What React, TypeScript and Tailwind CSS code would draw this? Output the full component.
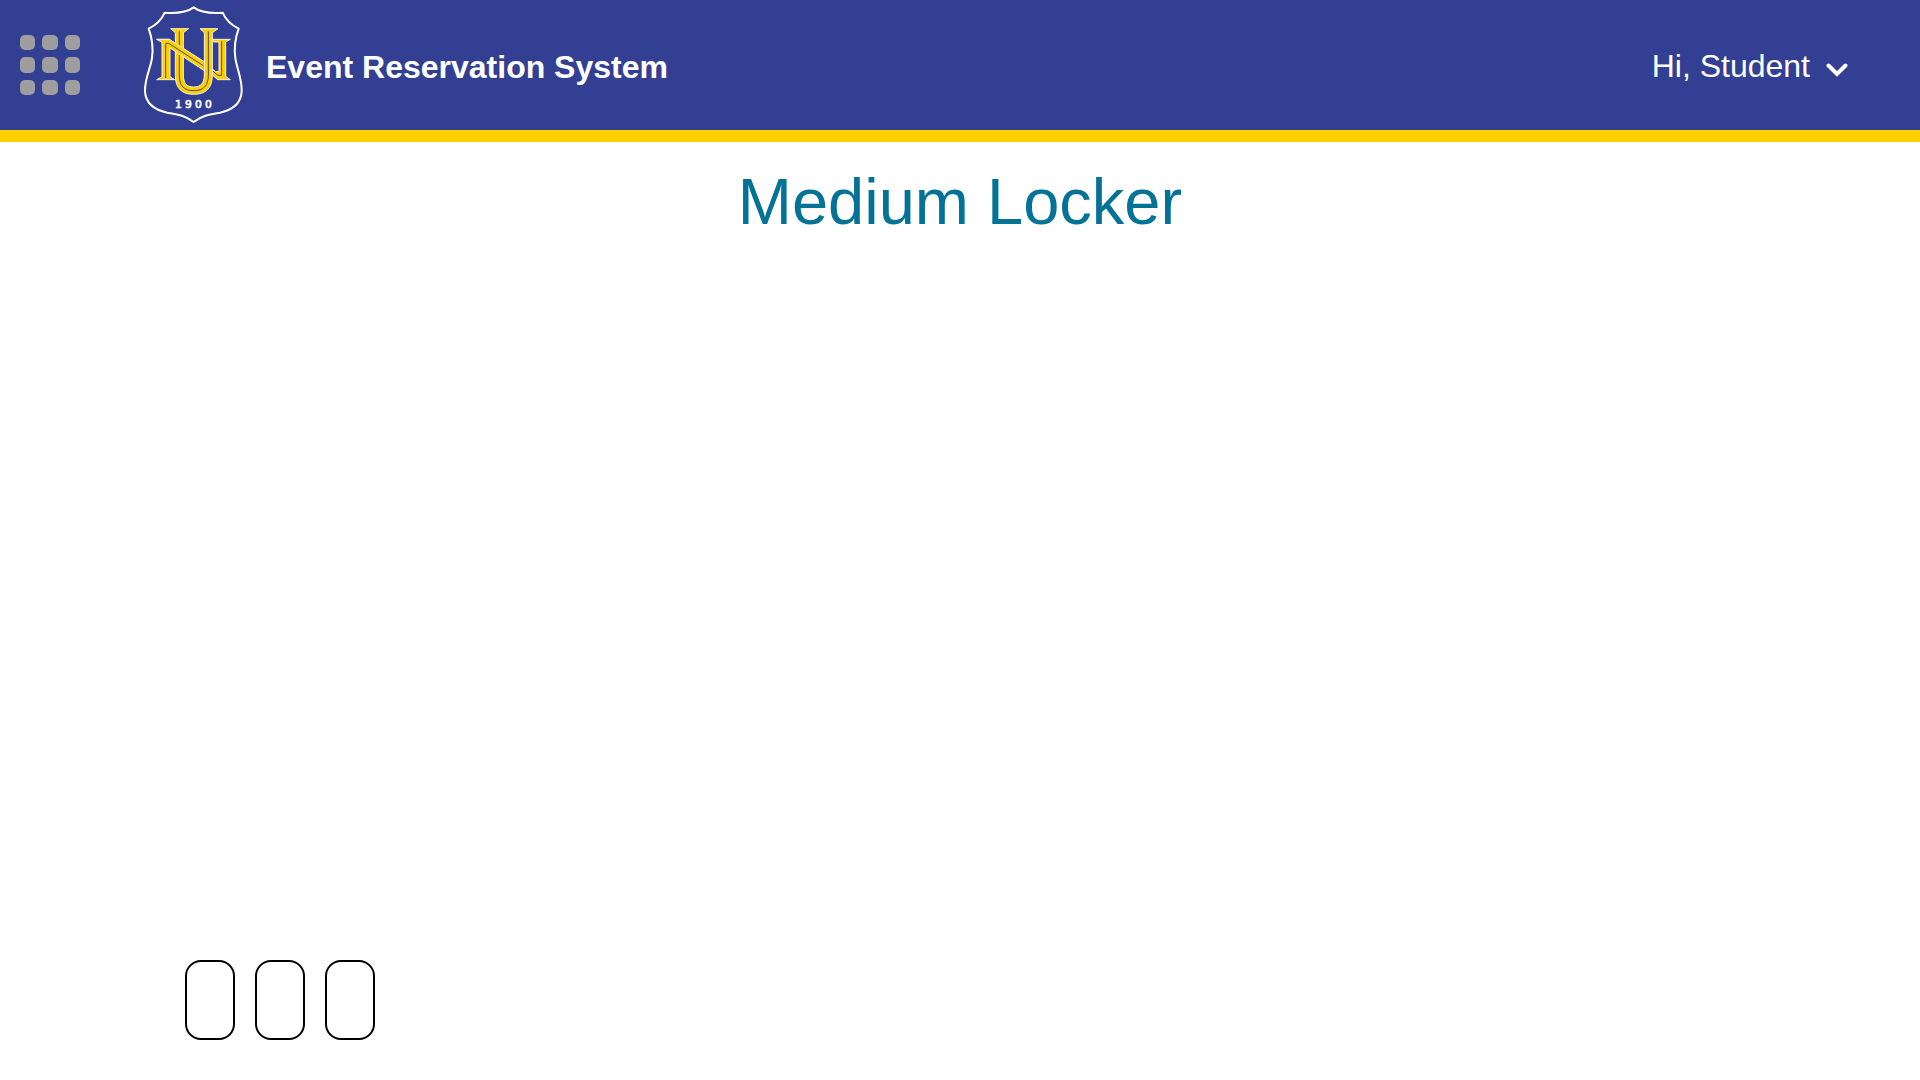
import React from "react";

const DOTS = [0, 22, 45];

function AppsIcon() {
  return (
    <svg width="60" height="60" viewBox="0 0 60 60" fill="#9e9e9e" aria-hidden="true">
      {DOTS.map((y) =>
        DOTS.map((x) => <rect key={`${x}-${y}`} x={x} y={y} width={x === 22 ? 16 : 15} height={y === 22 ? 16 : 15} rx="5" />)
      )}
    </svg>
  );
}

function Crest() {
  return (
    <svg className="h-[130px] w-[110px] shrink-0" viewBox="0 0 330 390" role="img" aria-label="NU 1900">
      <path
        d="M161 22 Q187 42 248 38 Q262 70 296 86 C285 116 282 145 286 174 C291 208 306 234 305 274 C303 311 276 330 240 338 C207 343 183 348 161 366 C139 348 115 343 82 338 C46 330 17 311 15 274 C14 234 31 208 36 174 C40 145 37 116 26 86 Q60 70 74 38 Q135 42 161 22 Z"
        fill="none"
        stroke="#fff"
        strokeWidth="6"
        strokeLinejoin="round"
      />
      <g fill="#ffd000" stroke="#f4f1e4" strokeWidth="3" strokeLinejoin="miter">
        <path d="M205 118 H271 L257 126 V229 L271 239 H233 L217 225 V207 L227 215 H237 V126 L222 126 Z" />
        <path d="M50 118 H90 L90 230 L104 239 H50 L66 230 V127 Z" />
        <path d="M92 86 H146 L130 98 V222 C130 250 139 261 161 261 C183 261 193 250 193 222 V98 L180 86 H234 L217 98 V226 C217 266 196 283 161 283 C126 283 106 266 106 226 V98 Z" />
      </g>
      <g fill="none" stroke="#4d4a55" strokeWidth="3">
        <path d="M118 94 V225 C118 258 132 272 161 272 C190 272 205 258 205 225 V94" />
        <path d="M77 138 V234" />
        <path d="M245 123 V226 H234 L219 214" />
      </g>
      <path d="M67 118 H88 L191 184 V211 L87 142 V132 L67 125 Z" fill="#ffd000" />
      <path d="M50 118 H88 L191 184 M90 144 L191 211" fill="none" stroke="#f4f1e4" strokeWidth="3" />
      <path d="M77 140 V130 H86 L190 197" fill="none" stroke="#4d4a55" strokeWidth="3" />
      <path d="M193 180 V214" stroke="#f4f1e4" strokeWidth="3" />
      <text
        y="325"
        x="105 135 165 195"
        fill="#fff"
        stroke="#fff"
        strokeWidth="2"
        fontFamily="DejaVu Sans"
        fontSize="32"
      >
        1900
      </text>
    </svg>
  );
}

function Header() {
  return (
    <header className="flex items-center justify-between border-b-[12px] border-[#ffd000] bg-[#323f92] pr-[72px] pl-5 text-[32px] leading-10 text-white">
      <div className="flex items-center">
        <button type="button" aria-label="Open menu" className="mr-[60px]">
          <AppsIcon />
        </button>
        <Crest />
        <div className="ml-4 pt-1 font-bold">Event Reservation System</div>
      </div>
      <button type="button" className="flex items-center gap-4 pt-0.5">
        <span>Hi, Student</span>
        <svg className="mt-2" width="22" height="14" viewBox="0 0 22 14" fill="none" aria-hidden="true">
          <path d="M2.5 2.5 L11 11 L19.5 2.5" stroke="#fff" strokeWidth="4" strokeLinecap="round" />
        </svg>
      </button>
    </header>
  );
}

export default function App() {
  return (
    <div className="flex min-h-screen flex-col bg-white font-['Liberation_Sans',Arial,sans-serif]">
      <Header />
      <main className="flex flex-1 flex-col justify-between pt-6 pb-10">
        <h1 className="text-center text-[65px] leading-[72px] text-[#037297]">Medium Locker</h1>
        <div className="flex gap-5 pl-[185px]">
          {[1, 2, 3].map((n) => (
            <button
              key={n}
              type="button"
              aria-label={`Locker ${n}`}
              className="h-20 w-[50px] rounded-2xl border-2 border-black bg-white"
            />
          ))}
        </div>
      </main>
    </div>
  );
}
